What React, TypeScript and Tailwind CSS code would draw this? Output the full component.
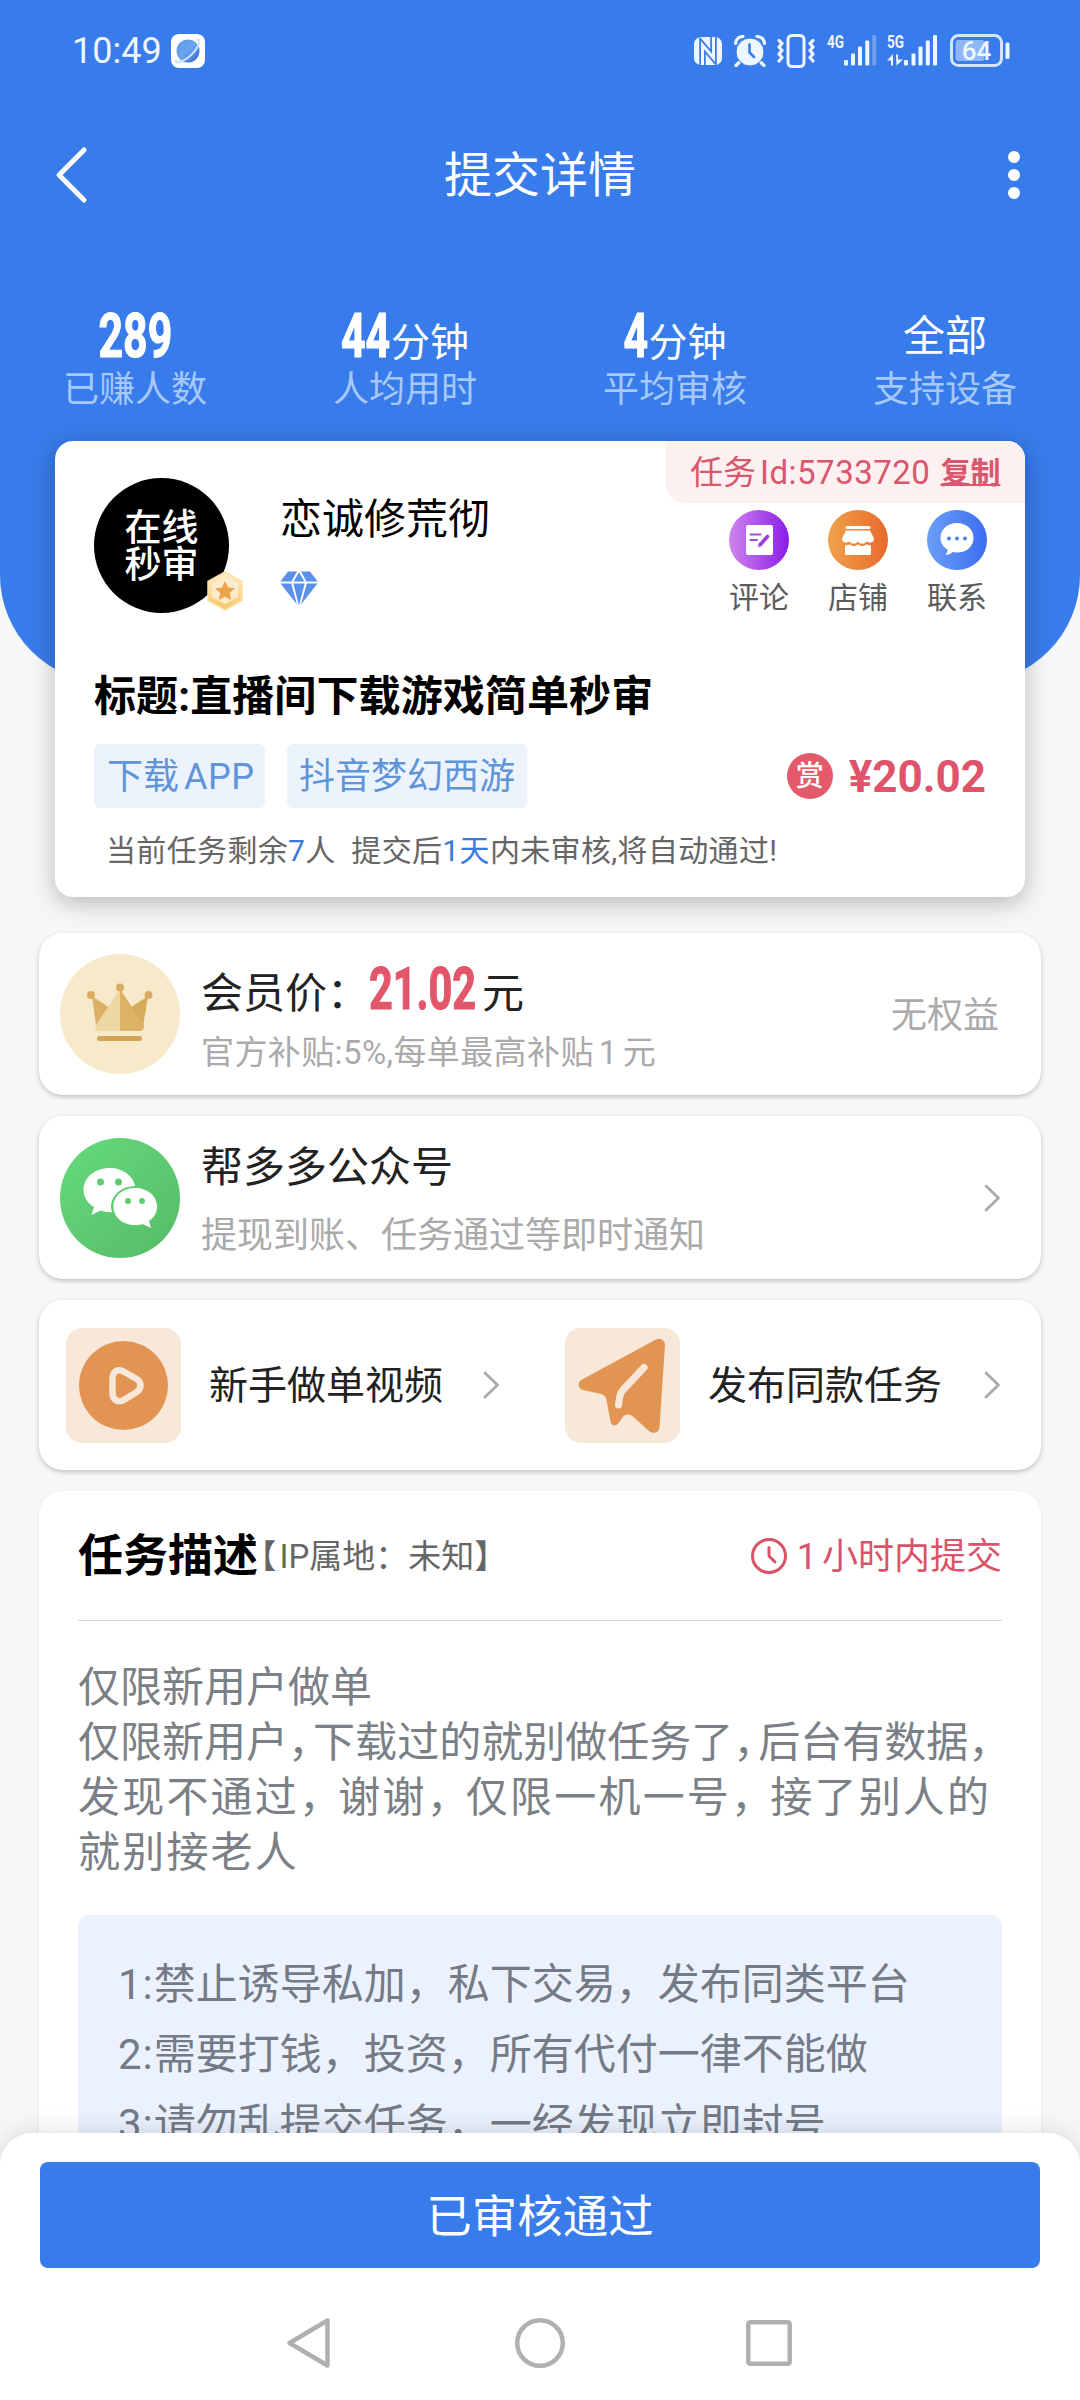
import type { ReactNode } from 'react'

interface StatProps {
  label: string
  children: ReactNode
}

function Stat({ label, children }: StatProps) {
  return (
    <div className="flex w-[270px] flex-col items-center">
      <div className="flex h-[66px] items-center justify-center text-white">{children}</div>
      <span className="text-[36px] leading-[42px] text-[#a6c8fb]">{label}</span>
    </div>
  )
}

function StatusBar() {
  return (
    <div className="flex h-[102px] items-center pl-[72px] pr-[70px] text-[#eef6ff]">
      <span className="w-[99px] whitespace-nowrap text-[36px] leading-[40px]">10:49</span>
      <svg className="h-[34px] w-[34px]" viewBox="0 0 34 34">
        <defs>
          <linearGradient id="planet" x1="0" y1="0" x2="1" y2="1">
            <stop offset="0" stopColor="#5a9be8" />
            <stop offset="0.5" stopColor="#6ba4ee" />
            <stop offset="1" stopColor="#2f5fd0" />
          </linearGradient>
        </defs>
        <rect width="34" height="34" rx="8" fill="#fff" />
        <circle cx="17" cy="17" r="11.5" fill="url(#planet)" />
        <path d="M26 6c3-1 3 2 1 6-3 6-10 13-16 15-4 2-7 2-6-1" fill="none" stroke="#cfe1fb" strokeWidth="2" strokeLinecap="round" />
      </svg>

      <div className="ml-auto flex items-center">
        {/* NFC */}
        <svg className="h-[30px] w-[28px]" viewBox="0 0 28 30">
          <defs>
            <clipPath id="nfc">
              <rect x="0" y="1" width="28" height="28" rx="7" />
            </clipPath>
          </defs>
          <g clipPath="url(#nfc)" fill="none">
            <rect x="0" y="1" width="28" height="28" fill="#eef6ff" />
            <path d="M8.500 30V9L19.500 22V0" stroke="#387bea" strokeWidth="6.500" />
            <path d="M8.500 30V9L19.500 22V0" stroke="#eef6ff" strokeWidth="3" />
          </g>
        </svg>
        {/* Alarm */}
        <svg className="ml-[12px] h-[32px] w-[32px]" viewBox="0 0 32 32">
          <path d="M1.500 8.500C2 4.500 5 1.800 9 1.500M30.500 8.500C30 4.500 27 1.800 23 1.500M5 27.500l-3 3M27 27.500l3 3" stroke="#eef6ff" strokeWidth="3.200" strokeLinecap="round" fill="none" />
          <circle cx="16" cy="17" r="14" fill="#eef6ff" stroke="#387bea" strokeWidth="1" />
          <path d="M15.500 9.500v8l4.500 4.500" stroke="#387bea" strokeWidth="2.600" strokeLinecap="round" fill="none" />
        </svg>
        {/* Vibrate */}
        <svg className="ml-[11px] h-[34px] w-[38px]" viewBox="0 0 38 34">
          <rect x="11" y="1.500" width="16" height="31" rx="4" fill="none" stroke="#eef6ff" strokeWidth="3" />
          <path d="M2 6.500l3 3-3 3.500 3 3.500-3 3.500 3 3.500-3 3.500M36 6.500l-3 3 3 3.500-3 3.500 3 3.500-3 3.500 3 3.500" fill="none" stroke="#eef6ff" strokeWidth="3.200" strokeLinejoin="round" strokeLinecap="round" />
        </svg>
        {/* 4G signal */}
        <svg className="ml-[12px] h-[34px] w-[50px] overflow-visible" viewBox="0 0 50 34" fill="#eef6ff">
          <text x="0" y="14" fontSize="18" fontWeight="700" textLength="17" lengthAdjust="spacingAndGlyphs">4G</text>
          <rect x="17" y="26" width="4" height="5.500" rx="1" />
          <rect x="24" y="19.500" width="4" height="12" rx="1" />
          <rect x="31" y="12.500" width="4" height="19" rx="1" />
          <rect x="38.300" y="6.500" width="4" height="25" rx="1" />
          <rect x="45.300" y="1" width="4" height="30.500" rx="1" opacity="0.300" />
        </svg>
        {/* 5G signal */}
        <svg className="ml-[10px] h-[34px] w-[51px] overflow-visible" viewBox="0 0 51 34" fill="#eef6ff">
          <text x="0" y="14" fontSize="18" fontWeight="700" textLength="17" lengthAdjust="spacingAndGlyphs">5G</text>
          <path d="M0 26.500L6 20V31.500H4V26.500zM9 20.500H11V25.500H16L9.500 31.500z" />
          <rect x="17" y="26" width="4" height="5.500" rx="1" />
          <rect x="24.500" y="19.500" width="4" height="12" rx="1" />
          <rect x="31.500" y="12.500" width="4" height="19" rx="1" />
          <rect x="38.800" y="6.500" width="4" height="25" rx="1" />
          <rect x="46" y="1" width="4" height="30.500" rx="1" />
        </svg>
        {/* Battery */}
        <svg className="ml-[12px] h-[34px] w-[60px]" viewBox="0 0 60 34">
          <rect x="1.500" y="1.500" width="50" height="30" rx="7" fill="none" stroke="#d5e5fd" strokeWidth="3" />
          <rect x="5.500" y="6" width="29" height="21" rx="3" fill="#8fb6f6" />
          <rect x="55.500" y="8.500" width="4" height="16.500" rx="1.500" fill="#eef6ff" />
          <text x="26.500" y="25.500" fontSize="26" fontWeight="500" textAnchor="middle" fill="#eef6ff">64</text>
        </svg>
      </div>
    </div>
  )
}

function Header() {
  return (
    <header className="h-[683px] shrink-0 rounded-b-[108px] bg-[#387bea]">
      <StatusBar />
      <div className="flex h-[145px] items-center justify-between pl-[53px] pr-[60px]">
        <svg className="h-[60px] w-[36px]" viewBox="0 0 36 60" fill="none" stroke="#fff" strokeWidth="5" strokeLinecap="round" strokeLinejoin="round">
          <path d="M31 5L6 30L31 55" />
        </svg>
        <h1 className="mr-[5px] pt-[2px] text-[48px] leading-[60px] text-white">提交详情</h1>
        <div className="flex w-[24px] flex-col items-center gap-[6px] pl-[12px]">
          <span className="h-3 w-3 rounded-full bg-white" />
          <span className="h-3 w-3 rounded-full bg-white" />
          <span className="h-3 w-3 rounded-full bg-white" />
        </div>
      </div>
      <div className="mt-[56px] flex">
        <Stat label="已赚人数">
          <Condensed className="w-[74px] text-[62px]">289</Condensed>
        </Stat>
        <Stat label="人均用时">
          <Condensed className="w-[50px] text-[62px]">44</Condensed>
          <span className="pt-[14px] text-[39px] leading-[50px]">分钟</span>
        </Stat>
        <Stat label="平均审核">
          <Condensed className="w-[25px] text-[62px]">4</Condensed>
          <span className="pt-[14px] text-[39px] leading-[50px]">分钟</span>
        </Stat>
        <Stat label="支持设备">
          <span className="pt-[1px] text-[42px] leading-[64px]">全部</span>
        </Stat>
      </div>
    </header>
  )
}

// narrow display digits
function Condensed({ className, children }: { className: string; children: ReactNode }) {
  return (
    <span className={`inline-flex justify-center font-bold leading-[64px] ${className}`}>
      <span className="scale-x-[0.69] [-webkit-text-stroke:1.200px_currentColor]">{children}</span>
    </span>
  )
}

function Action({ label, children }: { label: string; children: ReactNode }) {
  return (
    <div className="flex w-[60px] flex-col items-center">
      {children}
      <span className="mt-[10px] whitespace-nowrap text-[30px] leading-[36px] text-[#5c5c5c]">{label}</span>
    </div>
  )
}

function TaskCard() {
  return (
    <section className="relative mx-[55px] h-[456px] rounded-[18px] bg-white px-[39px] pt-[37px] shadow-[0_6px_24px_rgba(0,0,0,0.26)]">
      <div className="absolute right-0 top-0 flex h-[62px] w-[359px] items-center rounded-bl-[18px] rounded-tr-[18px] bg-[#fdf0f0] pl-[24px] pt-[2px] text-[#d9566c]">
        <span className="whitespace-nowrap text-[33px] leading-[40px]">
          任务<span className="ml-[4px] tracking-[0.500px]">Id:5733720</span>
        </span>
        <span className="ml-[10px] whitespace-nowrap text-[30px] font-bold leading-[40px] underline decoration-2 underline-offset-[1px]">复制</span>
      </div>

      <div className="flex h-[135px]">
        <div className="relative flex h-[135px] w-[135px] flex-col items-center justify-center rounded-full bg-black pt-[2px] text-[37px] font-medium leading-[37px] text-white">
          <span>在线</span>
          <span>秒审</span>
          <svg className="absolute -right-[14px] top-[93px] h-[40px] w-[36px]" viewBox="0 0 36 40">
            <defs>
              <linearGradient id="badge" x1="0" y1="0" x2="0" y2="1">
                <stop offset="0" stopColor="#fdeecb" />
                <stop offset="1" stopColor="#f8c765" />
              </linearGradient>
            </defs>
            <path d="M18 1L35 10.500V29.500L18 39L1 29.500V10.500Z" fill="url(#badge)" stroke="#fbe0a6" strokeWidth="1.500" strokeLinejoin="round" />
            <path d="M18 5.500L31 12.500V26L18 33L5 26V12.500Z" fill="#fceccb" />
            <path d="M18 10l3 6.500 7 .8-5.200 4.800 1.400 7L18 25.700l-6.200 3.400 1.400-7L8 17.300l7-.8z" fill="#eba24a" />
          </svg>
        </div>
        <div className="ml-[51px] pt-[15px]">
          <p className="text-[42px] leading-[54px]">恋诚修荒彻</p>
          <svg className="mt-[24px] h-[35px] w-[38px]" viewBox="0 0 38 35" fill="#5b90ea">
            <path d="M8 .5H17L11.500 10.500H.3z" />
            <path d="M21 .5H30L37.700 10.500H26.500z" />
            <path d="M19 1.500L24.500 10.500H13.500z" />
            <path d="M.5 12.500H11.200L17 33.500z" />
            <path d="M13.300 12.500H24.700L19 34.500z" />
            <path d="M26.800 12.500H37.500L21 33.500z" />
          </svg>
        </div>
        <div className="ml-auto mr-[-1px] flex items-start gap-[39px] pt-[32px] [&_svg]:shrink-0">
          <Action label="评论">
            <svg className="h-[60px] w-[60px]" viewBox="0 0 60 60">
              <defs>
                <linearGradient id="violet">
                  <stop offset="0" stopColor="#cf86ee" />
                  <stop offset="1" stopColor="#8a1be6" />
                </linearGradient>
              </defs>
              <circle cx="30" cy="30" r="30" fill="url(#violet)" />
              <rect x="17" y="15" width="27" height="30" rx="2" fill="#fff" />
              <path d="M21.500 24.500H31.500M21.500 30H28" stroke="#a04fd8" strokeWidth="2" strokeLinecap="round" />
              <path d="M38.500 26.500L31.500 34.500" stroke="#9a3fdd" strokeWidth="3.600" strokeLinecap="round" />
              <path d="M30 32.500l3 2.500-4 2.500z" fill="#9a3fdd" />
            </svg>
          </Action>
          <Action label="店铺">
            <svg className="h-[60px] w-[60px]" viewBox="0 0 60 60">
              <defs>
                <linearGradient id="amber">
                  <stop offset="0" stopColor="#eea24c" />
                  <stop offset="1" stopColor="#e8692a" />
                </linearGradient>
              </defs>
              <circle cx="30" cy="30" r="30" fill="url(#amber)" />
              <rect x="17.500" y="16" width="25" height="3" rx="1.500" fill="#fff" />
              <path d="M18 20.500H42L46 28.500C46.500 32 42.500 34 38.500 31.500C36 34.500 32.500 34.500 30 31.500C27.500 34.500 24 34.500 21.500 31.500C17.500 34 13.500 32 14 28.500Z" fill="#fff" />
              <path d="M17 35.500C19 35.500 20.500 35 21.500 34.300C24.500 36.800 27.500 36.500 30 34.300C32.500 36.500 35.500 36.800 38.500 34.300C39.500 35 41 35.500 43 35.500V43.500C43 44.500 42.500 45 41.500 45H18.500C17.500 45 17 44.500 17 43.500Z" fill="#fff" />
            </svg>
          </Action>
          <Action label="联系">
            <svg className="h-[60px] w-[60px]" viewBox="0 0 60 60">
              <defs>
                <linearGradient id="azure">
                  <stop offset="0" stopColor="#6b9ff8" />
                  <stop offset="1" stopColor="#3c6df0" />
                </linearGradient>
              </defs>
              <circle cx="30" cy="30" r="30" fill="url(#azure)" />
              <path d="M30 13C39.500 13 46.500 19.500 46.500 28C46.500 36.500 39.500 42.500 30 42.500C28.500 42.500 27 42.300 25.500 42C24.500 43.500 21.500 45 18.500 45C20 43 20.500 41 20.500 39.500C16 37 13.500 33 13.500 28C13.500 19.500 20.500 13 30 13Z" fill="#fff" />
              <circle cx="22" cy="28.500" r="2" fill="#4f80f0" />
              <circle cx="30" cy="28.500" r="2" fill="#4f80f0" />
              <circle cx="38" cy="28.500" r="2" fill="#4f80f0" />
            </svg>
          </Action>
        </div>
      </div>

      <h2 className="mt-[59px] text-[42px] font-bold leading-[50px] tracking-[0.100px]">标题:直播间下载游戏简单秒审</h2>

      <div className="mt-[22px] flex h-[64px] items-center">
        <span className="flex h-[64px] w-[171px] items-center rounded-[6px] bg-[#ecf3fd] pl-[13px] pt-[2px] text-[36px] text-[#6094d9]">
          下载<span className="ml-[5px] tracking-[0.500px]">APP</span>
        </span>
        <span className="ml-[22px] flex h-[64px] w-[240px] items-center rounded-[6px] bg-[#ecf3fd] pl-[12px] pt-[2px] text-[36px] text-[#6094d9]">
          抖音梦幻西游
        </span>
        <span className="ml-auto flex h-[46px] w-[46px] items-center justify-center rounded-full bg-[#e35b6b] pt-[1px] text-[28px] font-medium leading-none text-white">
          赏
        </span>
        <span className="ml-[16px] pt-[1px] text-[44px] font-bold leading-[64px] text-[#e0546b]">¥20.02</span>
      </div>

      <p className="mt-[23px] whitespace-pre pl-[12px] text-[30px] leading-[40px] tracking-[0.350px] text-[#666]">
        当前任务剩余<span className="text-[#3a78dd]">7</span>人{'  '}提交后<span className="text-[#3a78dd]">1天</span>内未审核,将自动通过!
      </p>
    </section>
  )
}

function Chevron() {
  return (
    <svg className="h-[30px] w-[18px] shrink-0" viewBox="0 0 18 30" fill="none" stroke="#aaa" strokeWidth="2.800" strokeLinecap="round" strokeLinejoin="round">
      <path d="M3 3L15.500 15L3 27" />
    </svg>
  )
}

function CrownIcon() {
  return (
    <svg className="h-[120px] w-[120px]" viewBox="0 0 120 120">
      <circle cx="60" cy="60" r="60" fill="#f7eacb" />
      <path d="M32 42L50 54L36 71z" fill="#dcb064" />
      <path d="M88 42L70 54L83 73z" fill="#d9a95a" />
      <path d="M60 35L36 71L35 75L38 77H60z" fill="#edd7a3" />
      <path d="M60 35V77H80C82 77 83.500 76 83.500 74L84.500 72z" fill="#ddb265" />
      <circle cx="31" cy="41" r="4" fill="#d8ab5f" />
      <circle cx="60" cy="33.500" r="4" fill="#d8ab5f" />
      <circle cx="88.500" cy="41" r="4" fill="#d8ab5f" />
      <rect x="37" y="82" width="45" height="5" rx="2.500" fill="#d3a459" />
    </svg>
  )
}

function WechatIcon() {
  return (
    <svg className="h-[120px] w-[120px]" viewBox="0 0 120 120">
      <defs>
        <linearGradient id="wechat" x1="0" y1="0" x2="1" y2="1">
          <stop offset="0" stopColor="#66da7d" />
          <stop offset="1" stopColor="#56bb66" />
        </linearGradient>
      </defs>
      <circle cx="60" cy="60" r="60" fill="url(#wechat)" />
      <path d="M49.500 30C35 30 23.500 39.500 23.500 52C23.500 59 27.500 65 34 69L31.500 77L40.500 72.500C45 74 50 74.500 54 74C62 74 75 62 75.500 50C74 38 63 30 49.500 30Z" fill="#fff" />
      <ellipse cx="75" cy="68.500" rx="24" ry="20.500" fill="#5fca70" />
      <path d="M75 50C87.500 50 97 58 97 68.500C97 74.500 94 79.500 89 83L91 90L82.500 86C80 86.800 78 87 75 87C62.500 87 53.500 79 53.500 68.500C53.500 58 62.500 50 75 50Z" fill="#fff" />
      <circle cx="40.500" cy="44" r="3.500" fill="#5fcb72" />
      <circle cx="58.500" cy="44" r="3.500" fill="#5fcb72" />
      <circle cx="68" cy="63" r="3" fill="#5fcb72" />
      <circle cx="82" cy="63" r="3" fill="#5fcb72" />
    </svg>
  )
}

function VideoIcon() {
  return (
    <svg className="h-[115px] w-[115px]" viewBox="0 0 115 115">
      <rect width="115" height="115" rx="16" fill="#f8e8da" />
      <circle cx="57.500" cy="57.500" r="44.500" fill="#e29553" />
      <path d="M46.500 51C46.500 43 52 40 58.500 44L70 50.500C76 54 76 61 70 64.500L58.500 71.500C52 75.500 46.500 72 46.500 65Z" fill="none" stroke="#f8e8da" strokeWidth="6.500" strokeLinejoin="round" />
    </svg>
  )
}

function SendIcon() {
  return (
    <svg className="h-[115px] w-[115px]" viewBox="0 0 115 115">
      <rect width="115" height="115" rx="16" fill="#f8e8da" />
      <path d="M91 11.500C95 9.500 100 12 100 17L94.500 99C94.500 104.500 88.500 106.500 84 103L69 89.500C66 86 61.500 85.500 58.500 88L53.500 95C51 99 46 98 45.500 93.500L41.500 72C41 69 39 67 36 66L18 62C12.500 60.500 12 54 17 51.500Z" fill="#e29553" />
      <path d="M79 39.500L57.500 62.500C55.500 64.500 55 67 54.500 70L53.500 77" fill="none" stroke="#f8e8da" strokeWidth="7" strokeLinecap="round" strokeLinejoin="round" />
    </svg>
  )
}

const cardClass = 'flex items-center rounded-[24px] bg-white shadow-[0_2px_5px_rgba(0,0,0,0.22)]'

// full width commas are set tighter than the characters around them
function Line({ text, commaClass }: { text: string; commaClass: string }) {
  return (
    <>
      {text.split('').map((ch, i) =>
        ch === '，' ? (
          <span key={i} className={`[font-feature-settings:'halt'] ${commaClass}`}>
            {ch}
          </span>
        ) : (
          ch
        ),
      )}
    </>
  )
}

const rules = [
  '禁止诱导私加，私下交易，发布同类平台',
  '需要打钱，投资，所有代付一律不能做',
  '请勿乱提交任务，一经发现立即封号',
]

function Description() {
  return (
    <section className="h-[760px] shrink-0 rounded-t-[24px] bg-white px-[39px] shadow-[0_1px_4px_rgba(0,0,0,0.06)]">
      <div className="flex h-[130px] items-center border-b border-[#d6d6d6]">
        <h3 className="pt-[3px] text-[45px] font-bold leading-[60px]">任务描述</h3>
        <span className="ml-[2px] pt-[3px] text-[33px] leading-[60px] text-[#666]">
          <span className="[font-feature-settings:'halt']">【</span>
          <span className="ml-[3px]">IP</span>属地：未知】
        </span>
        <div className="ml-auto flex items-center text-[#d9546a]">
          <svg className="h-[36px] w-[36px]" viewBox="0 0 36 36" fill="none" stroke="#d9546a" strokeWidth="3" strokeLinecap="round" strokeLinejoin="round">
            <circle cx="18" cy="18" r="16.500" />
            <path d="M18 9.500V18L24 24" />
          </svg>
          <span className="ml-[10px] pt-[3px] text-[36px] leading-[60px]">
            1<span className="ml-[5px]">小时内提交</span>
          </span>
        </div>
      </div>

      <div className="mt-[39px] whitespace-nowrap text-[42px] leading-[55px] text-[#7b7f86]">
        <p>仅限新用户做单</p>
        <p>
          <Line text="仅限新用户，下载过的就别做任务了，后台有数据，" commaClass="mr-[4px]" />
        </p>
        <p className="tracking-[2.200px]">
          <Line text="发现不通过，谢谢，仅限一机一号，接了别人的" commaClass="mr-[16px]" />
        </p>
        <p className="tracking-[2.200px]">就别接老人</p>
      </div>

      <ul className="mt-[35px] h-[300px] whitespace-nowrap rounded-[12px] bg-[#ebf2fd] px-[40px] pt-[35px] text-[42px] leading-[70px] text-[#747b86]">
        {rules.map((rule, i) => (
          <li key={rule}>
            <span className="tracking-[1px]">{i + 1}:</span>
            {rule}
          </li>
        ))}
      </ul>
    </section>
  )
}

export default function App() {
  return (
    <div className="relative flex h-[2400px] w-[1080px] flex-col overflow-hidden bg-[#f7f7f7] font-[Roboto,'Noto_Sans_CJK_SC',sans-serif] text-black">
      <Header />

      <main className="-mt-[242px] flex flex-col">
        <TaskCard />

        <div className="mx-[39px] mt-[36px] flex flex-col gap-[21px]">
          <div className={`${cardClass} h-[162px] pl-[21px] pr-[42px]`}>
            <CrownIcon />
            <div className="ml-[21px] pt-[12px]">
              <div className="flex h-[60px] items-center whitespace-nowrap pt-[2px] text-[42px] text-[#222]">
                会员价：
                <Condensed className="-mt-[9px] ml-[1px] w-[106px] text-[60px] text-[#e2566b]">21.02</Condensed>
                <span className="ml-[6px]">元</span>
              </div>
              <p className="mt-[5px] whitespace-nowrap text-[33px] leading-[50px] tracking-[0.400px] text-[#aaa]">
                官方补贴:5%,每单最高补贴<span className="mx-[5px]">1</span>元
              </p>
            </div>
            <span className="ml-auto pt-[4px] text-[36px] text-[#aaa]">无权益</span>
          </div>

          <div className={`${cardClass} h-[163px] pl-[21px] pr-[40px]`}>
            <WechatIcon />
            <div className="ml-[21px] pt-[6px]">
              <p className="text-[42px] leading-[64px] text-[#222]">帮多多公众号</p>
              <p className="mt-[6px] text-[36px] leading-[60px] text-[#aaa]">提现到账、任务通过等即时通知</p>
            </div>
            <span className="ml-auto">
              <Chevron />
            </span>
          </div>

          <div className={`${cardClass} h-[170px] pl-[27px] pr-[40px] text-[39px] text-[#222]`}>
            <VideoIcon />
            <span className="ml-[28px] pt-[2px]">新手做单视频</span>
            <span className="ml-[39px]">
              <Chevron />
            </span>
            <span className="ml-auto">
              <SendIcon />
            </span>
            <span className="ml-[28px] mr-[41px] pt-[2px]">发布同款任务</span>
            <Chevron />
          </div>

          <Description />
        </div>
      </main>

      {/* Bottom bar */}
      <footer className="absolute inset-x-0 bottom-0 h-[267px] rounded-t-[32px] bg-white px-[40px] pt-[29px] shadow-[0_-2px_24px_rgba(0,0,0,0.12)]">
        <button className="block h-[106px] w-full rounded-[8px] bg-[#387bea] pt-[6px] text-[45.500px] text-white">已审核通过</button>
        <div className="mt-[48px] flex items-center pl-[245px]">
          <svg className="h-[54px] w-[48px]" viewBox="0 0 48 54" fill="none" stroke="#b0b0b0" strokeWidth="4.500" strokeLinejoin="round">
            <path d="M42.500 4.500V49.500L4.500 27z" />
          </svg>
          <svg className="ml-[180px] h-[54px] w-[54px]" viewBox="0 0 54 54" fill="none" stroke="#b0b0b0" strokeWidth="4.500">
            <circle cx="27" cy="27" r="22.800" />
          </svg>
          <svg className="ml-[179px] h-[46px] w-[46px]" viewBox="0 0 46 46" fill="none" stroke="#b0b0b0" strokeWidth="4.500">
            <rect x="2.300" y="2.300" width="41.400" height="41.400" rx="2" />
          </svg>
        </div>
      </footer>
    </div>
  )
}
